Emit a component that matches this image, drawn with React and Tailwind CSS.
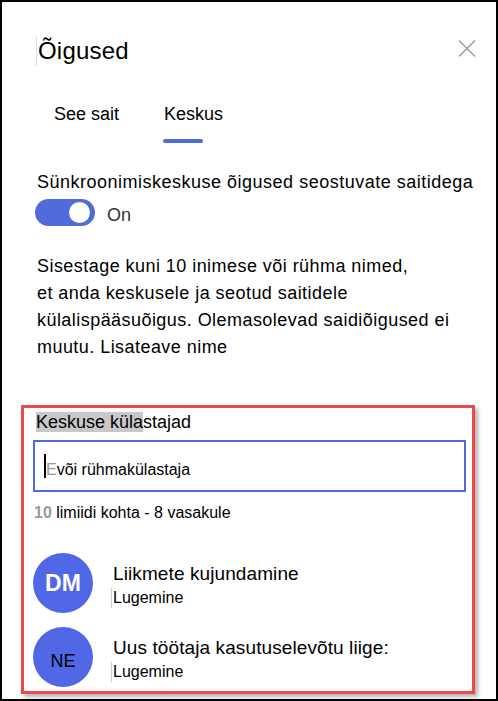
import React from 'react';

const font = { fontFamily: '"Liberation Sans", Arial, sans-serif' };

const Member = ({ initials, bold, name, role }) => (
  <div className="flex items-start gap-[20px]">
    <div
      className={`w-[60px] h-[60px] rounded-full bg-[#5068e6] flex items-center justify-center shrink-0 ${
        bold ? 'text-white font-bold text-[23px]' : 'text-black text-[18px] pt-[9px]'
      }`}
    >
      {initials}
    </div>
    <div className="flex flex-col pt-[9px]">
      <span className="text-[19px] leading-[24px] text-black tracking-[0.1px]">{name}</span>
      <span className="text-[16px] leading-[20px] text-black mt-[2px] border-l border-[#ccc] pl-[1px] -ml-[2px]">
        {role}
      </span>
    </div>
  </div>
);

export default function App() {
  return (
    <div style={font} className="w-[498px] h-[701px] border-2 border-black bg-white overflow-hidden text-black">
      {/* Header */}
      <div className="flex items-start justify-between pl-[34px] pr-[20px] pt-[34px]">
        <h1 className="text-[24px] leading-[30px] font-normal tracking-[0.2px] border-l border-[#ddd] pl-[1px]">Õigused</h1>
        <button className="mt-[4px] w-[18px] h-[17px] text-[#9a9a9a]">
          <svg viewBox="0 0 18 17" className="w-[18px] h-[17px]" fill="none" stroke="currentColor" strokeWidth="1.4">
            <path d="M1 0.5 L17 16.5 M17 0.5 L1 16.5" />
          </svg>
        </button>
      </div>

      {/* Tabs */}
      <div className="flex pl-[52px] mt-[37px] gap-[45px] text-[18px]">
        <span className="leading-[22px]">See sait</span>
        <div className="flex flex-col items-start">
          <span className="leading-[22px]">Keskus</span>
          <div className="mt-[14px] -ml-[1px] w-[40px] h-[4px] rounded-full bg-[#4f6bdc]" />
        </div>
      </div>

      {/* Sync toggle */}
      <div className="pl-[33px] mt-[27px]">
        <p className="pl-[2px] text-[18px] leading-[24px] tracking-[0.5px]">
          Sünkroonimiskeskuse õigused seostuvate saitidega
        </p>
        <div className="flex items-center gap-[12px] mt-[2px]">
          <div className="w-[60px] h-[27px] rounded-full bg-[#4f6bdc] flex items-center justify-end pr-[5px]">
            <div className="w-[21px] h-[21px] rounded-full bg-white" />
          </div>
          <span className="text-[18px] text-[#333] mt-[6px]">On</span>
        </div>
      </div>

      {/* Description */}
      <p className="pl-[35px] mt-[24px] text-[18px] leading-[27px] tracking-[0.45px]">
        Sisestage kuni 10 inimese või rühma nimed,
        <br />
        et anda keskusele ja seotud saitidele
        <br />
        külalispääsuõigus. Olemasolevad saidiõigused ei
        <br />
        muutu. Lisateave nime
      </p>

      {/* Guests box */}
      <div className="ml-[19px] mt-[44px] w-[454px] border-[3px] border-[#ef4848] shadow-[3px_3px_4px_rgba(0,0,0,0.3)] pl-[9px] pt-[2px] pb-[4px]">
        <div className="pl-[3px] text-[18px] leading-[24px]">
          <span className="bg-[#c8c8c8]">Keskuse küla</span>stajad
        </div>
        <div className="mt-[6px] w-[433px] h-[52px] border-2 border-[#4f6bdc] flex items-center pl-[9px]">
          <span className="w-[2px] h-[24px] bg-black" />
          <span className="text-[16px] leading-[20px] text-[#999] mt-[7px]">E</span>
          <span className="text-[16px] leading-[20px] mt-[7px]">või rühmakülastaja</span>
        </div>
        <div className="mt-[11px] pl-[1px] text-[16px] leading-[20px]">
          <span className="font-bold text-[#999]">10</span> limiidi kohta - 8 vasakule
        </div>
        <div className="mt-[30px] flex flex-col gap-[14px]">
          <Member initials="DM" bold name="Liikmete kujundamine" role="Lugemine" />
          <Member initials="NE" name="Uus töötaja kasutuselevõtu liige:" role="Lugemine" />
        </div>
      </div>
    </div>
  );
}
